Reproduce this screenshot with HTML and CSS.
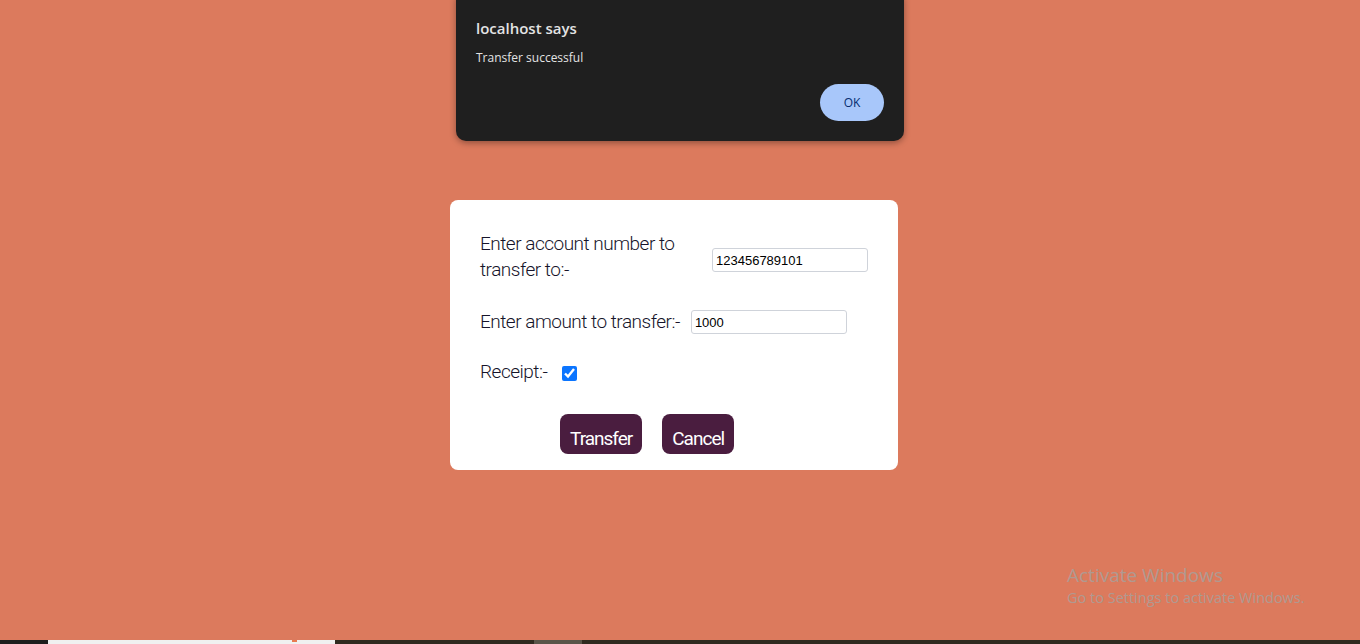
FILE: index.html
```html
<!DOCTYPE html>
<html lang="en">
<head>
<meta charset="utf-8">
<title>Transfer</title>
<link rel="stylesheet" href="styles.css">
</head>
<body>
<div class="page">
  <div class="card">
    <div class="row row-acc">
      <label class="lbl" for="acc">Enter account number to transfer to:-</label>
      <input id="acc" class="field field-acc" type="text" value="123456789101">
    </div>
    <div class="row row-amt">
      <label class="lbl nowrap" for="amt">Enter amount to transfer:-</label>
      <input id="amt" class="field" type="text" value="1000">
    </div>
    <div class="row row-rec">
      <label class="lbl nowrap" for="rec">Receipt:-</label>
      <input id="rec" class="check" type="checkbox" checked>
    </div>
    <div class="actions">
      <button class="btn">Transfer</button>
      <button class="btn">Cancel</button>
    </div>
  </div>
</div>

<div class="alert">
  <div class="alert-title">localhost says</div>
  <div class="alert-msg">Transfer successful</div>
  <div class="alert-actions"><button class="ok">OK</button></div>
</div>

<div class="watermark">
  <div class="wm-1">Activate Windows</div>
  <div class="wm-2">Go to Settings to activate Windows.</div>
</div>

<div class="taskbar">
  <div class="tb-a"></div>
  <div class="tb-b"><span class="tb-dot"></span></div>
  <div class="tb-c"></div>
  <div class="tb-d"></div>
  <div class="tb-e"></div>
</div>
</body>
</html>
```

FILE: styles.css
```css
html, body {
  margin: 0;
  padding: 0;
  height: 100%;
}
body {
  background: #dc7a5d;
  overflow: hidden;
  position: relative;
  font-family: Roboto, "Liberation Sans", sans-serif;
}
.page {
  display: flex;
  justify-content: center;
  padding-top: 200px;
  padding-right: 12px;
}
.card {
  width: 388px;
  background: #ffffff;
  border-radius: 8px;
  padding: 31px 30px 16px 30px;
  display: flex;
  flex-direction: column;
}
.row {
  display: flex;
  align-items: center;
  gap: 10px;
}
.lbl {
  font-family: Roboto, "Liberation Sans", sans-serif;
  font-weight: 300;
  font-size: 19px;
  letter-spacing: -0.5px;
  line-height: 26px;
  color: #16142a;
  flex: 1 1 auto;
}
.nowrap {
  flex: 0 0 auto;
  white-space: nowrap;
}
.row-amt { margin-top: 26px; }
.row-amt .field { margin-left: 1px; }
.row-rec { margin-top: 24px; gap: 15px; }
.field {
  flex: 0 0 auto;
  width: 156px;
  height: 24px;
  box-sizing: border-box;
  border: 1px solid #cfd3da;
  border-radius: 3px;
  padding: 0 3px;
  font-family: "Liberation Sans", Arial, sans-serif;
  font-size: 13px;
  color: #000;
  background: #fff;
  outline: none;
}
.field-acc {
  margin-top: 6px;
}
.check {
  width: 15px;
  height: 15px;
  margin: 2px 0 0 0;
  accent-color: #0b75ff;
}
.actions {
  display: flex;
  gap: 20px;
  padding-left: 80px;
  margin-top: 29px;
}
.btn {
  background: #4a1d3f;
  color: #ffffff;
  border: none;
  border-radius: 8px;
  height: 40px;
  padding: 8px 10px 0 10px;
  font-family: Roboto, "Liberation Sans", sans-serif;
  font-weight: 400;
  font-size: 19px;
  letter-spacing: -1px;
}
.alert {
  position: absolute;
  left: 456px;
  top: -10px;
  width: 448px;
  height: 151px;
  box-sizing: border-box;
  background: #1f1f1f;
  border-radius: 10px;
  box-shadow: 0 2px 6px rgba(0,0,0,0.35);
  padding: 28px 20px 0 20px;
  font-family: "Open Sans", "Noto Sans", sans-serif;
  color: #e3e3e3;
}
.alert-title {
  font-size: 15px;
  font-weight: 600;
  line-height: 20px;
}
.alert-msg {
  margin-top: 12px;
  font-size: 12px;
  line-height: 16px;
}
.alert-actions {
  display: flex;
  justify-content: flex-end;
  margin-top: 18px;
}
.ok {
  width: 64px;
  height: 37px;
  border: none;
  border-radius: 19px;
  background: #a8c7fa;
  color: #062e6f;
  font-family: "Open Sans", "Noto Sans", sans-serif;
  font-size: 12px;
  font-weight: 500;
}
.watermark {
  position: absolute;
  left: 1067px;
  top: 564px;
  color: rgba(170, 158, 152, 0.9);
  font-family: "Open Sans", "Noto Sans", sans-serif;
}
.wm-1 { font-size: 19px; line-height: 22px; }
.wm-2 { font-size: 14.5px; line-height: 19px; margin-top: 2px; }
.taskbar {
  position: absolute;
  left: 0;
  right: 0;
  bottom: 0;
  height: 4px;
  display: flex;
}
.tb-a { width: 48px; background: #1e1e1e; }
.tb-b { width: 287px; background: #f0f0f0; position: relative; }
.tb-dot { position: absolute; left: 244px; top: 0; width: 5px; height: 2px; background: #e87a50; }
.tb-c { width: 199px; background: #302a1f; }
.tb-d { width: 48px; background: #5a5549; }
.tb-e { flex: 1; background: #302a1f; }
```
